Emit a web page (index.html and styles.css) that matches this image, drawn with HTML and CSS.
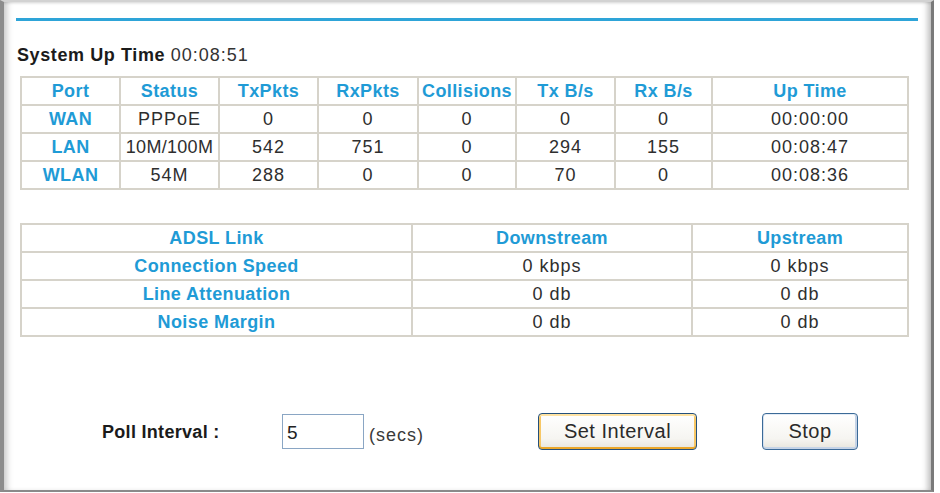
FILE: index.html
```html
<!DOCTYPE html>
<html>
<head>
<meta charset="utf-8">
<title>Router Statistics</title>
<link rel="stylesheet" href="styles.css">
</head>
<body>
<div class="window">
  <div class="rule"></div>

  <p class="uptime"><b>System Up Time</b> <span class="uptime-val">00:08:51</span></p>

  <table class="grid ports">
    <colgroup>
      <col class="c99"><col class="c99"><col class="c99"><col class="c100">
      <col class="c98"><col class="c99"><col class="c97"><col class="c196">
    </colgroup>
    <tr class="head">
      <th>Port</th><th>Status</th><th>TxPkts</th><th>RxPkts</th>
      <th>Collisions</th><th>Tx B/s</th><th>Rx B/s</th><th>Up Time</th>
    </tr>
    <tr><th>WAN</th><td>PPPoE</td><td>0</td><td>0</td><td>0</td><td>0</td><td>0</td><td>00:00:00</td></tr>
    <tr><th>LAN</th><td class="tight">10M/100M</td><td>542</td><td>751</td><td>0</td><td>294</td><td>155</td><td>00:08:47</td></tr>
    <tr><th>WLAN</th><td>54M</td><td>288</td><td>0</td><td>0</td><td>70</td><td>0</td><td>00:08:36</td></tr>
  </table>

  <table class="grid adsl">
    <colgroup>
      <col class="c391"><col class="c280"><col class="c216">
    </colgroup>
    <tr class="head"><th>ADSL Link</th><th>Downstream</th><th>Upstream</th></tr>
    <tr><th>Connection Speed</th><td>0 kbps</td><td>0 kbps</td></tr>
    <tr><th>Line Attenuation</th><td>0 db</td><td>0 db</td></tr>
    <tr><th>Noise Margin</th><td>0 db</td><td>0 db</td></tr>
  </table>

  <form class="poll">
    <label class="poll-label" for="interval">Poll Interval :</label>
    <input class="poll-input" id="interval" type="text" value="5">
    <span class="poll-unit">(secs)</span>
    <button type="button" class="btn btn-default">Set Interval</button>
    <button type="button" class="btn btn-stop">Stop</button>
  </form>
</div>
</body>
</html>
```

FILE: styles.css
```css
html, body {
  margin: 0;
  padding: 0;
  background: #fff;
}

body {
  font-family: "Liberation Sans", Arial, sans-serif;
  color: #2b2b2b;
}

/* framed page area with the grey window edges */
.window {
  box-sizing: border-box;
  width: 934px;
  height: 492px;
  border-top: 2px solid #d2d2d2;
  border-left: 4px solid #8c8c8c;
  border-right: 3px solid #7a7a7a;
  border-bottom: 2px solid #8a8a8a;
  box-shadow:
    inset 7px 0 6px -4px rgba(0, 0, 0, 0.22),
    inset -7px 0 6px -4px rgba(0, 0, 0, 0.28),
    inset 0 3px 3px -2px rgba(0, 0, 0, 0.12);
  padding: 16px 12px 0 12px;
}

.rule {
  height: 3px;
  width: 902px;
  background: #2ea4d8;
}

.uptime {
  margin: 24px 0 0 1px;
  font-size: 18px;
  line-height: 20px;
  letter-spacing: 0.6px;
  color: #1b1b1b;
}

.uptime-val {
  font-weight: normal;
  color: #333;
  letter-spacing: 1px;
}

/* data tables */
.grid {
  margin-left: 4px;
  width: 887px;
  table-layout: fixed;
  border-collapse: collapse;
  border: 2px solid #d6d3ca;
  font-size: 18px;
}

.grid th,
.grid td {
  border: 2px solid #d6d3ca;
  height: 26px;
  padding: 0;
  text-align: center;
  white-space: nowrap;
  overflow: hidden;
}

.grid th {
  color: #1f9bd6;
  font-weight: bold;
  letter-spacing: 0.4px;
}

.grid td {
  color: #2e2e2e;
  letter-spacing: 1px;
}

.grid td.tight {
  letter-spacing: 0.3px;
}

.ports {
  margin-top: 11px;
}

.adsl {
  margin-top: 33px;
}

.c99 { width: 99px; }
.c100 { width: 100px; }
.c98 { width: 98px; }
.c97 { width: 97px; }
.c196 { width: 196px; }
.c391 { width: 391px; }
.c280 { width: 280px; }
.c216 { width: 216px; }

/* poll interval controls */
.poll {
  display: flex;
  align-items: center;
  margin: 76px 0 0 86px;
}

.poll-label {
  width: 180px;
  font-size: 18px;
  font-weight: bold;
  letter-spacing: 0.3px;
  color: #1b1b1b;
  padding-top: 2px;
}

.poll-input {
  box-sizing: border-box;
  width: 82px;
  height: 35px;
  border: 1px solid #8aa6c4;
  padding: 2px 0 0 4px;
  font-family: "Liberation Sans", Arial, sans-serif;
  font-size: 19px;
  color: #222;
  outline: none;
}

.poll-unit {
  margin-left: 5px;
  width: 58px;
  font-size: 18px;
  letter-spacing: 1px;
  color: #3a3a3a;
  padding-top: 8px;
}

.btn {
  box-sizing: border-box;
  height: 37px;
  border-radius: 4px;
  font-family: "Liberation Sans", Arial, sans-serif;
  font-size: 20px;
  letter-spacing: 0.5px;
  color: #2a2a2a;
  background: linear-gradient(#ffffff, #f6f5f1 70%, #e7e5dc);
  padding: 0;
}

.btn-default {
  margin-left: 111px;
  width: 159px;
  border: 1px solid #24507c;
  box-shadow:
    inset 0 2px 0 #ffe3a3,
    inset 0 -2px 0 #eba72a,
    inset 2px 0 0 #f7c766,
    inset -2px 0 0 #f7c766;
}

.btn-stop {
  margin-left: 65px;
  width: 96px;
  border: 1px solid #3b6a97;
  box-shadow:
    inset 0 1px 0 #e4ecf6,
    inset 0 -2px 0 #c5d3e6,
    inset 1px 0 0 #d6e1ef,
    inset -2px 0 0 #c5d3e6;
}
```
